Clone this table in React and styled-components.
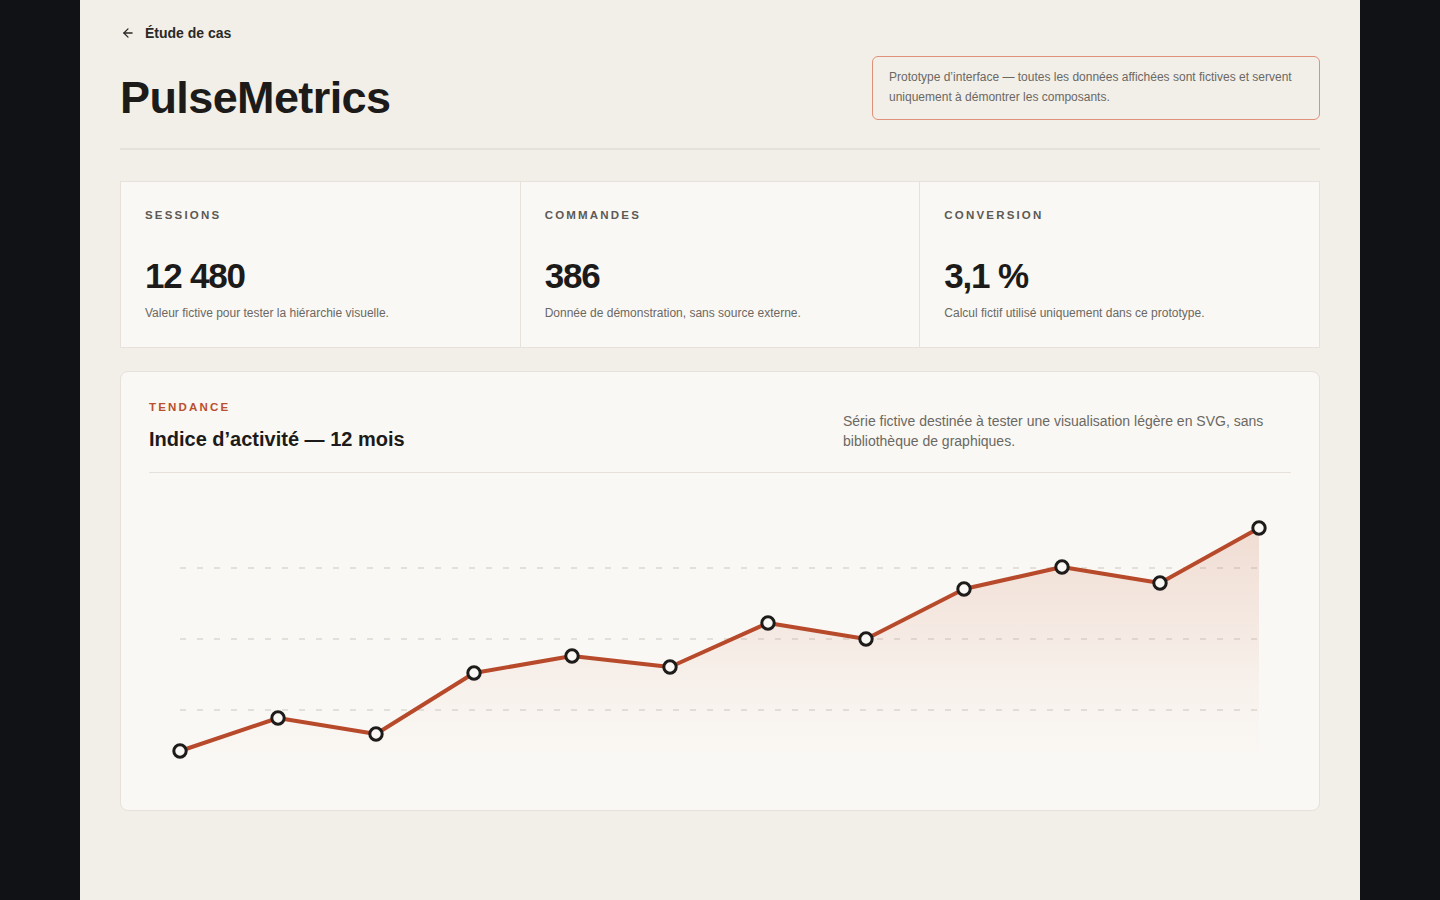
import React from "react";
import styled, { createGlobalStyle } from "styled-components";
import { ArrowLeft } from "lucide-react";

const GlobalStyle = createGlobalStyle`
  * { box-sizing: border-box; }
  html, body { margin: 0; padding: 0; background: #111215; }
  body { font-family: "Liberation Sans", Arial, Helvetica, sans-serif; color: #1c1b19; }
`;

const Page = styled.div`
  width: 1280px;
  min-height: 100vh;
  margin: 0 auto;
  background: #f2efe9;
  padding: 24px 40px 60px;
`;

const BackLink = styled.a`
  display: flex;
  width: fit-content;
  align-items: center;
  gap: 10px;
  font-size: 14px;
  font-weight: 700;
  color: #2a2926;
  text-decoration: none;
  height: 18px;
  margin-left: 1px;
`;

const Header = styled.header`
  display: flex;
  justify-content: space-between;
  align-items: flex-start;
  margin-top: 14px;
  padding-bottom: 24px;
  border-bottom: 2px solid #e5e1da;
`;

const Title = styled.h1`
  margin: 16px 0 0;
  font-size: 45px;
  line-height: 52px;
  font-weight: 700;
  letter-spacing: -0.6px;
  color: #1c1b19;
`;

const Notice = styled.div`
  width: 448px;
  border: 1.5px solid #e0917b;
  border-radius: 6px;
  padding: 10px 16px 12px;
  font-size: 12px;
  line-height: 20px;
  color: #6b6863;
`;

const StatsGrid = styled.section`
  display: grid;
  grid-template-columns: repeat(3, 1fr);
  gap: 1px;
  background: #e6e2db;
  border: 1px solid #e6e2db;
  margin-top: 31px;
`;

const StatCell = styled.div`
  background: #faf8f4;
  padding: 26px 24px 25px;
`;

const StatLabel = styled.div`
  font-size: 11.5px;
  line-height: 14px;
  font-weight: 700;
  letter-spacing: 0.19em;
  color: #5d5a55;
  text-transform: uppercase;
`;

const StatValue = styled.div`
  margin-top: 35px;
  font-size: 35px;
  line-height: 38px;
  font-weight: 700;
  letter-spacing: -1.2px;
  color: #1c1b19;
`;

const StatDesc = styled.div`
  margin-top: 9px;
  font-size: 12px;
  line-height: 18px;
  color: #6b6863;
`;

const ChartCard = styled.section`
  margin-top: 23px;
  background: #faf8f4;
  border: 1px solid #e6e2db;
  border-radius: 8px;
  padding: 28px 28px 28px;
`;

const ChartHeader = styled.div`
  display: flex;
  justify-content: space-between;
  align-items: flex-end;
  padding-bottom: 21px;
  border-bottom: 1.5px solid #e6e2db;
`;

const Eyebrow = styled.div`
  font-size: 11.5px;
  line-height: 14px;
  font-weight: 700;
  letter-spacing: 0.19em;
  color: #b9502f;
`;

const ChartTitle = styled.h2`
  margin: 13px 0 0;
  font-size: 20px;
  line-height: 24px;
  font-weight: 700;
  color: #1c1b19;
`;

const ChartDesc = styled.p`
  margin: 0;
  width: 448px;
  font-size: 14px;
  line-height: 20px;
  color: #6b6863;
`;

const ChartSvg = styled.svg`
  display: block;
  width: 1142px;
  height: 309px;
`;

const points = [
  [180, 751], [278, 718], [376, 734], [474, 673], [572, 656], [670, 667],
  [768, 623], [866, 639], [964, 589], [1062, 567], [1160, 583], [1259, 528],
].map(([x, y]) => [x - 149, y - 473]);

const grid = [568, 639, 710].map((y) => y - 473);

const stats = [
  { label: "Sessions", value: "12 480", desc: "Valeur fictive pour tester la hiérarchie visuelle." },
  { label: "Commandes", value: "386", desc: "Donnée de démonstration, sans source externe." },
  { label: "Conversion", value: "3,1 %", desc: "Calcul fictif utilisé uniquement dans ce prototype." },
];

function Chart() {
  const line = points.map(([x, y], i) => `${i ? "L" : "M"}${x} ${y}`).join(" ");
  const bottom = 285;
  const area = `${line} L${points[points.length - 1][0]} ${bottom} L${points[0][0]} ${bottom} Z`;
  return (
    <ChartSvg viewBox="0 0 1142 309">
      <defs>
        <linearGradient id="areaFill" x1="0" y1="0" x2="0" y2="1" gradientUnits="objectBoundingBox">
          <stop offset="0" stopColor="#c9704f" stopOpacity="0.2" />
          <stop offset="0.7" stopColor="#c9704f" stopOpacity="0.05" />
          <stop offset="1" stopColor="#c9704f" stopOpacity="0" />
        </linearGradient>
      </defs>
      {grid.map((y) => (
        <line key={y} x1={points[0][0]} x2={points[11][0]} y1={y} y2={y}
          stroke="#dcd8d1" strokeWidth="1.5" strokeDasharray="6 11" />
      ))}
      <path d={area} fill="url(#areaFill)" />
      <path d={line} fill="none" stroke="#b84a2c" strokeWidth="4" strokeLinejoin="round" strokeLinecap="round" />
      {points.map(([x, y], i) => (
        <circle key={i} cx={x} cy={y} r="6.2" fill="#faf8f4" stroke="#1d1c1a" strokeWidth="3" />
      ))}
    </ChartSvg>
  );
}

export default function App() {
  return (
    <>
      <GlobalStyle />
      <Page>
        <BackLink href="#">
          <ArrowLeft size={14} strokeWidth={2.2} />
          Étude de cas
        </BackLink>
        <Header>
          <Title>PulseMetrics</Title>
          <Notice>
            Prototype d’interface — toutes les données affichées sont fictives et servent
            uniquement à démontrer les composants.
          </Notice>
        </Header>
        <StatsGrid>
          {stats.map((s) => (
            <StatCell key={s.label}>
              <StatLabel>{s.label}</StatLabel>
              <StatValue>{s.value}</StatValue>
              <StatDesc>{s.desc}</StatDesc>
            </StatCell>
          ))}
        </StatsGrid>
        <ChartCard>
          <ChartHeader>
            <div>
              <Eyebrow>TENDANCE</Eyebrow>
              <ChartTitle>Indice d’activité — 12 mois</ChartTitle>
            </div>
            <ChartDesc>
              Série fictive destinée à tester une visualisation légère en SVG, sans bibliothèque de graphiques.
            </ChartDesc>
          </ChartHeader>
          <Chart />
        </ChartCard>
      </Page>
    </>
  );
}
